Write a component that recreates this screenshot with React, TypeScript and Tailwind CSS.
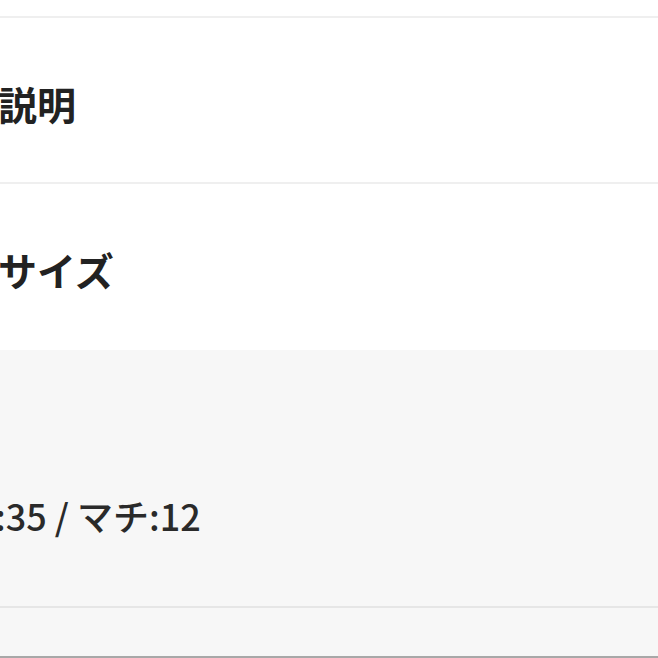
export default function App() {
  return (
    <div
      className="w-[658px] h-[658px] overflow-hidden bg-white text-[#222]"
      style={{ fontFamily: '"Noto Sans CJK JP", "Noto Sans", sans-serif' }}
    >
      <div className="h-[16px]" />
      <div className="h-[2px] bg-[#efefef]" />
      <section className="h-[164px] flex items-center pt-[6px]">
        <h2 className="text-[39px] font-bold leading-none -ml-[2px]">説明</h2>
      </section>
      <div className="h-[2px] bg-[#efefef]" />
      <section className="h-[166px] flex items-center pt-[4px]">
        <h2 className="text-[39px] font-bold leading-none -ml-[2px]">サイズ</h2>
      </section>
      <div className="h-[256px] bg-[#f7f7f7] flex items-center pt-[74px]">
        <p className="text-[36px] font-medium leading-none -ml-[5px] text-[#2a2a2a]">:35 / マチ:12</p>
      </div>
      <div className="h-[2px] bg-[#e6e6e6]" />
      <div className="h-[48px] bg-[#f7f7f7]" />
      <div className="h-[2px] bg-[#a8a8a8]" />
    </div>
  )
}
